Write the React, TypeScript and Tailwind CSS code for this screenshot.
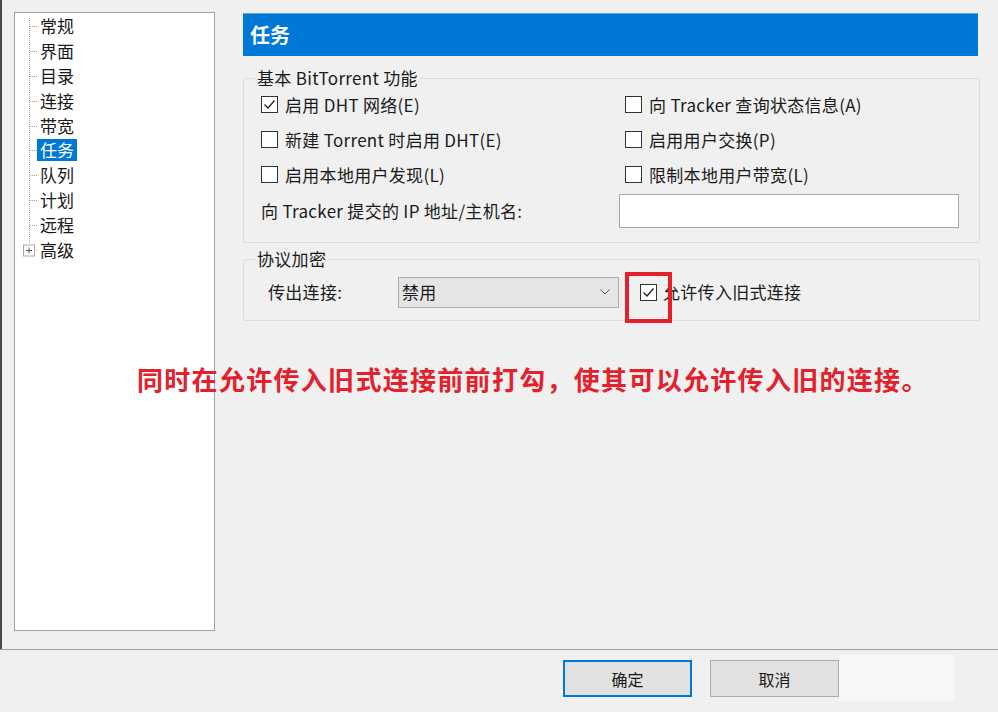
import { useState } from "react";

const font = { fontFamily: '"Noto Sans CJK SC", "Noto Sans", sans-serif' };

const treeItems = ["常规", "界面", "目录", "连接", "带宽", "任务", "队列", "计划", "远程", "高级"];
const ROW = 24.8;

const TreeLines = () => {
    const rows = treeItems.length;
    const lastY = ROW / 2 + (rows - 1) * ROW;
    return (
        <svg width="22" height={rows * ROW} className="shrink-0">
            <line x1="14.5" y1="4" x2="14.5" y2={lastY - 6} stroke="#a0a0a0" strokeDasharray="1 1" />
            {treeItems.map((_, i) => {
                const y = Math.round(ROW / 2 + i * ROW) + 0.5;
                const last = i === rows - 1;
                return <line key={i} x1={last ? 19 : 15} y1={y} x2="22" y2={y} stroke="#a0a0a0" strokeDasharray="1 1" />;
            })}
            <rect x="8.5" y={Math.round(lastY) - 5} width="11" height="11" fill="#fff" stroke="#a8a8a8" />
            <line x1="11" y1={Math.round(lastY) + 0.5} x2="17" y2={Math.round(lastY) + 0.5} stroke="#555" />
            <line x1="14" y1={Math.round(lastY) - 2.5} x2="14" y2={Math.round(lastY) + 3.5} stroke="#555" />
        </svg>
    );
};

const Check = ({ checked }: { checked?: boolean }) => (
    <span className="w-[17px] h-[17px] shrink-0 border border-[#333] bg-white flex items-center justify-center">
        {checked && (
            <svg width="13" height="13" viewBox="0 0 13 13">
                <path d="M1.5 6.5 L5 10 L11.5 2.5" fill="none" stroke="#222" strokeWidth="1.3" />
            </svg>
        )}
    </span>
);

const CheckRow = ({ label, checked }: { label: string; checked?: boolean }) => (
    <div className="h-[35px] flex items-center gap-[7px]">
        <Check checked={checked} />
        <span>{label}</span>
    </div>
);

export default function App() {
    const [selected] = useState("任务");
    return (
        <div className="w-[998px] h-[712px] bg-[#f0f0f0] relative overflow-hidden text-[17px] tracking-[0.3px] text-[#1a1a1a]" style={font}>
            <div className="h-[649px] flex border-l-2 border-[#4a4a4a]">
                <div className="ml-[12px] mt-[12px] w-[201px] h-[619px] bg-white border border-[#a0a0a0] pt-[1px] flex tracking-normal">
                    <TreeLines />
                    <div className="flex flex-col">
                        {treeItems.map((t) => (
                            <div key={t} className="h-[24.8px] flex items-center">
                                <span
                                    className={`px-[3px] h-[22px] leading-[22px] text-[17px] ${
                                        t === selected ? "bg-[#0078d7] text-white" : ""
                                    }`}
                                >
                                    {t}
                                </span>
                            </div>
                        ))}
                    </div>
                </div>

                <div className="ml-[28px] w-[737px] flex flex-col">
                    <div className="mt-[13px] h-[43px] w-[735px] bg-[#0078d7] border-t border-[#5aa6e6] flex items-center pl-[7px] text-white font-bold text-[20px] tracking-normal">
                        任务
                    </div>

                    <fieldset className="mt-[11px] h-[176px] border border-[#dcdcdc] rounded-[2px] px-[17px]">
                        <legend className="-ml-[6px] px-[2px] leading-[22px]">基本 BitTorrent 功能</legend>
                        <div className="flex -mt-[2px]">
                            <div className="w-[364px] flex flex-col">
                                <CheckRow label="启用 DHT 网络(E)" checked />
                                <CheckRow label="新建 Torrent 时启用 DHT(E)" />
                                <CheckRow label="启用本地用户发现(L)" />
                                <div className="h-[38px] flex items-center">向 Tracker 提交的 IP 地址/主机名:</div>
                            </div>
                            <div className="flex flex-col">
                                <CheckRow label="向 Tracker 查询状态信息(A)" />
                                <CheckRow label="启用用户交换(P)" />
                                <CheckRow label="限制本地用户带宽(L)" />
                                <div className="h-[38px] flex items-center -ml-[6px]">
                                    <div className="w-[340px] h-[34px] bg-white border border-[#a8a8a8]" />
                                </div>
                            </div>
                        </div>
                    </fieldset>

                    <fieldset className="mt-[5px] h-[73px] border border-[#dcdcdc] rounded-[2px] pl-[24px]">
                        <legend className="-ml-[13px] px-[2px] leading-[22px]">协议加密</legend>
                        <div className="flex items-center h-[34px] mt-[5px]">
                            <span className="w-[130px]">传出连接:</span>
                            <div className="w-[221px] h-[31px] bg-[#e5e5e5] border border-[#adadad] flex items-center justify-between pl-[3px] pr-[8px]">
                                <span>禁用</span>
                                <svg width="10" height="6" viewBox="0 0 10 6">
                                    <path d="M0.5 0.5 L5 5 L9.5 0.5" fill="none" stroke="#555" strokeWidth="1" />
                                </svg>
                            </div>
                            <div className="ml-[21px] flex items-center gap-[6px]">
                                <Check checked />
                                <span>允许传入旧式连接</span>
                            </div>
                        </div>
                    </fieldset>
                </div>
            </div>

            <div className="border-t border-[#a0a0a0] h-[63px] flex items-start pt-[10px] pl-[563px] gap-[18px] tracking-normal text-[16px]">
                <button className="w-[129px] h-[37px] bg-[#e1e1e1] border-2 border-[#0078d7]">确定</button>
                <button className="w-[129px] h-[37px] bg-[#e1e1e1] border border-[#adadad]">取消</button>
            </div>

            {/* blurred-out button area */}
            <div className="absolute left-[839px] top-[655px] w-[116px] h-[46px] bg-[#f7f7f7]" />

            {/* annotation */}
            <div className="absolute left-[625px] top-[272px] w-[47px] h-[51px] border-4 border-[#e3202b]" />
            <div className="absolute left-[137px] top-[361px] text-[26px] font-bold text-[#e3202b] tracking-[1.3px] whitespace-nowrap leading-[36px]">
                同时在允许传入旧式连接前前打勾，使其可以允许传入旧的连接。
            </div>
        </div>
    );
}
